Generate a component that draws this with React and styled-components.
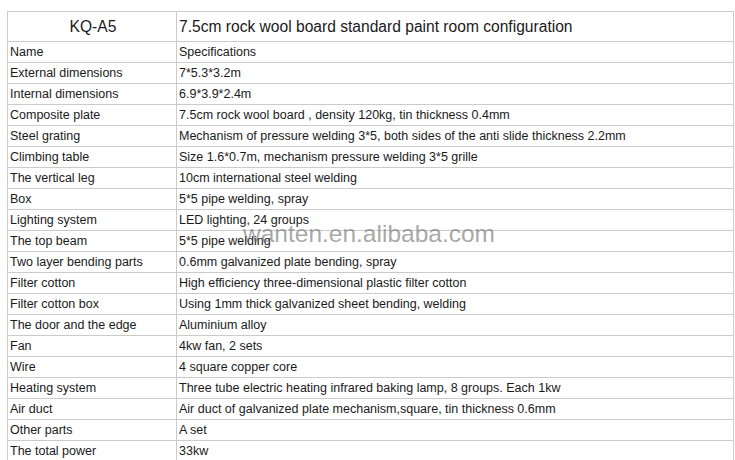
import styled, { createGlobalStyle } from "styled-components";

const Global = createGlobalStyle`
  html, body {
    margin: 0;
    padding: 0;
    background: #ffffff;
  }
  body {
    font-family: "Liberation Sans", Arial, sans-serif;
  }
`;

const Page = styled.div`
  position: relative;
  width: 735px;
  height: 460px;
  overflow: hidden;
  padding: 11px 0 0 7px;
  box-sizing: border-box;
`;

const Table = styled.table`
  border-collapse: collapse;
  table-layout: fixed;
  width: 726px;
  color: #1a1a1a;
`;

const Cell = styled.td`
  border: 1px solid #cbcbcb;
  height: ${(p) => (p.$head ? 30 : 21)}px;
  padding: 0 0 0 2px;
  font-size: ${(p) => (p.$head ? 15.6 : 12.5)}px;
  line-height: 1;
  text-align: ${(p) => (p.$center ? "center" : "left")};
  white-space: nowrap;
  vertical-align: middle;
  box-sizing: border-box;
`;

const Watermark = styled.div`
  position: absolute;
  left: 243px;
  top: 222px;
  font-family: "Liberation Sans", Arial, sans-serif;
  font-size: 24.5px;
  line-height: 1;
  color: rgba(110, 110, 110, 0.6);
  pointer-events: none;
`;

const rows = [
  ["Name", "Specifications"],
  ["External dimensions", "7*5.3*3.2m"],
  ["Internal dimensions", "6.9*3.9*2.4m"],
  ["Composite plate", "7.5cm rock wool board , density 120kg, tin thickness 0.4mm"],
  ["Steel grating", "Mechanism of pressure welding 3*5, both sides of the anti slide thickness 2.2mm"],
  ["Climbing table", "Size 1.6*0.7m, mechanism pressure welding 3*5 grille"],
  ["The vertical leg", "10cm international steel welding"],
  ["Box", "5*5 pipe welding, spray"],
  ["Lighting system", "LED lighting, 24 groups"],
  ["The top beam", "5*5 pipe welding"],
  ["Two layer bending parts", "0.6mm galvanized plate bending, spray"],
  ["Filter cotton", "High efficiency three-dimensional plastic filter cotton"],
  ["Filter cotton box", "Using 1mm thick galvanized sheet bending, welding"],
  ["The door and the edge", "Aluminium alloy"],
  ["Fan", "4kw fan, 2 sets"],
  ["Wire", "4 square copper core"],
  ["Heating system", "Three tube electric heating infrared baking lamp, 8 groups. Each 1kw"],
  ["Air duct", "Air duct of galvanized plate mechanism,square, tin thickness 0.6mm"],
  ["Other parts", "A set"],
  ["The total power", "33kw"],
];

export default function App() {
  return (
    <Page>
      <Global />
      <Table>
        <colgroup>
          <col style={{ width: 169 }} />
          <col style={{ width: 557 }} />
        </colgroup>
        <tbody>
          <tr>
            <Cell $head $center>KQ-A5</Cell>
            <Cell $head>7.5cm rock wool board standard paint room configuration</Cell>
          </tr>
          {rows.map(([name, spec]) => (
            <tr key={name}>
              <Cell>{name}</Cell>
              <Cell>{spec}</Cell>
            </tr>
          ))}
        </tbody>
      </Table>
      <Watermark>wanten.en.alibaba.com</Watermark>
    </Page>
  );
}
